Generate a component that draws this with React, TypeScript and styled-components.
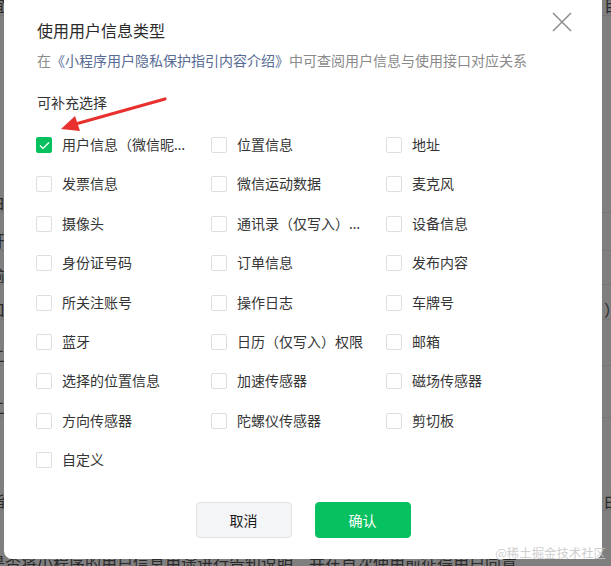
import React from "react";
import styled, { createGlobalStyle } from "styled-components";

const Global = createGlobalStyle`
  html, body { margin: 0; padding: 0; width: 611px; height: 566px; overflow: hidden; }
  body { font-family: "Noto Sans CJK SC", "Noto Sans", sans-serif; background: #fff; }
  * { box-sizing: border-box; }
`;

const Page = styled.div`
  width: 611px;
  height: 566px;
  position: relative;
  overflow: hidden;
  background: #ffffff;
  color: #555;
  font-size: 16px;
`;

const BgLine = styled.div<{ $top: number }>`
  display: flex;
  justify-content: space-between;
  margin-top: ${(p) => p.$top}px;
  margin-left: -11px;
  margin-right: -9px;
  height: 22px;
  line-height: 22px;
  white-space: nowrap;
  border-bottom: 1px solid #ececec;
`;

const Overlay = styled.div`
  position: absolute;
  inset: 0;
  background: rgba(0, 0, 0, 0.5);
`;

const Dialog = styled.div`
  position: absolute;
  left: 4px;
  top: -8px;
  width: 598px;
  height: 567px;
  background: #fff;
  border-radius: 8px;
  padding: 26px 32px 0 32px;
  display: flex;
  flex-direction: column;
`;

const Title = styled.div`
  font-size: 16px;
  line-height: 24px;
  color: #2b2b2b;
  padding-left: 1px;
`;

const Sub = styled.div`
  margin-top: 7px;
  font-size: 14px;
  line-height: 22px;
  color: #8a8a8a;
  padding-left: 1px;
`;

const Link = styled.span`
  color: #576b95;
`;

const Section = styled.div`
  margin-top: 20px;
  font-size: 14px;
  line-height: 22px;
  color: #333;
  padding-left: 1px;
`;

const Grid = styled.div`
  margin-top: 22px;
  display: grid;
  grid-template-columns: 175px 175px 175px;
  grid-auto-rows: 20px;
  row-gap: 19.4px;
`;

const Item = styled.label`
  display: flex;
  align-items: center;
  gap: 10px;
  height: 20px;
`;

const Box = styled.span<{ $on?: boolean }>`
  width: 16px;
  height: 16px;
  flex: none;
  border-radius: 2px;
  border: 1px solid ${(p) => (p.$on ? "#07c160" : "#dedede")};
  background: ${(p) => (p.$on ? "#07c160" : "#fff")};
  display: flex;
  align-items: center;
  justify-content: center;
`;

const Label = styled.span`
  font-family: "Noto Sans", "Noto Sans CJK SC", sans-serif;
  font-size: 14px;
  line-height: 20px;
  color: #353535;
  max-width: 129px;
  white-space: nowrap;
  overflow: hidden;
  text-overflow: ellipsis;
`;

const Footer = styled.div`
  margin-top: 32px;
  display: flex;
  justify-content: center;
  gap: 23px;
`;

const Btn = styled.button<{ $primary?: boolean }>`
  width: 96px;
  height: 36px;
  border-radius: 4px;
  font-family: inherit;
  font-size: 14px;
  border: 1px solid ${(p) => (p.$primary ? "#07c160" : "#e2e2e2")};
  background: ${(p) => (p.$primary ? "#07c160" : "#f4f5f6")};
  color: ${(p) => (p.$primary ? "#ffffff" : "#1a1a1a")};
  padding: 0;
`;

const Close = styled.div`
  position: absolute;
  top: 19px;
  right: 29px;
  width: 22px;
  height: 22px;
`;

const Arrow = styled.svg`
  position: absolute;
  left: 50px;
  top: 92px;
`;

const Watermark = styled.div`
  position: absolute;
  right: 5px;
  bottom: 4px;
  font-size: 12.4px;
  color: rgba(200, 200, 200, 0.9);
  font-family: "Noto Sans CJK SC", sans-serif;
`;

const items: string[] = [
  "用户信息（微信昵称、头像）",
  "位置信息",
  "地址",
  "发票信息",
  "微信运动数据",
  "麦克风",
  "摄像头",
  "通讯录（仅写入）权限",
  "设备信息",
  "身份证号码",
  "订单信息",
  "发布内容",
  "所关注账号",
  "操作日志",
  "车牌号",
  "蓝牙",
  "日历（仅写入）权限",
  "邮箱",
  "选择的位置信息",
  "加速传感器",
  "磁场传感器",
  "方向传感器",
  "陀螺仪传感器",
  "剪切板",
  "自定义",
];

const bgLines: { top: number; left: string; right: string }[] = [
  { top: -6, left: "谊", right: "目" },
  { top: 175, left: "白", right: "" },
  { top: 16, left: "开", right: "" },
  { top: 12, left: "偷", right: "" },
  { top: 13, left: "口", right: "）" },
  { top: 24, left: "二", right: "" },
  { top: 30, left: "二", right: "" },
  { top: 71, left: "脂", right: "由" },
  { top: 40, left: "是否将小程序的用户信息用途进行告知说明，并在首次使用前征得用户同意", right: "" },
];

export default function App() {
  return (
    <Page>
      <Global />
      {bgLines.map((l, i) => (
        <BgLine key={i} $top={l.top}>
          <span>{l.left}</span>
          <span>{l.right}</span>
        </BgLine>
      ))}
      <Overlay />
      <Dialog>
        <Title>使用用户信息类型</Title>
        <Sub>
          在<Link>《小程序用户隐私保护指引内容介绍》</Link>中可查阅用户信息与使用接口对应关系
        </Sub>
        <Section>可补充选择</Section>
        <Grid>
          {items.map((t, i) => (
            <Item key={t}>
              <Box $on={i === 0}>
                {i === 0 && (
                  <svg width="11" height="9" viewBox="0 0 11 9">
                    <path d="M1 4.6 L4 7.4 L10 1.4" fill="none" stroke="#fff" strokeWidth="1.4" />
                  </svg>
                )}
              </Box>
              <Label>{t}</Label>
            </Item>
          ))}
        </Grid>
        <Footer>
          <Btn>取消</Btn>
          <Btn $primary>确认</Btn>
        </Footer>
        <Close>
          <svg width="22" height="22" viewBox="0 0 22 22">
            <path d="M2 2 L20 20 M20 2 L2 20" stroke="#8c8c8c" strokeWidth="1.5" fill="none" />
          </svg>
        </Close>
      </Dialog>
      <Arrow width="120" height="45" viewBox="0 0 120 45">
        <path d="M115 7 L22 33" stroke="#e8312f" strokeWidth="3.2" strokeLinecap="round" fill="none" />
        <path d="M11 37 L25 24 L30 39 Z" fill="#e8312f" />
      </Arrow>
      <Watermark>@稀土掘金技术社区</Watermark>
    </Page>
  );
}
